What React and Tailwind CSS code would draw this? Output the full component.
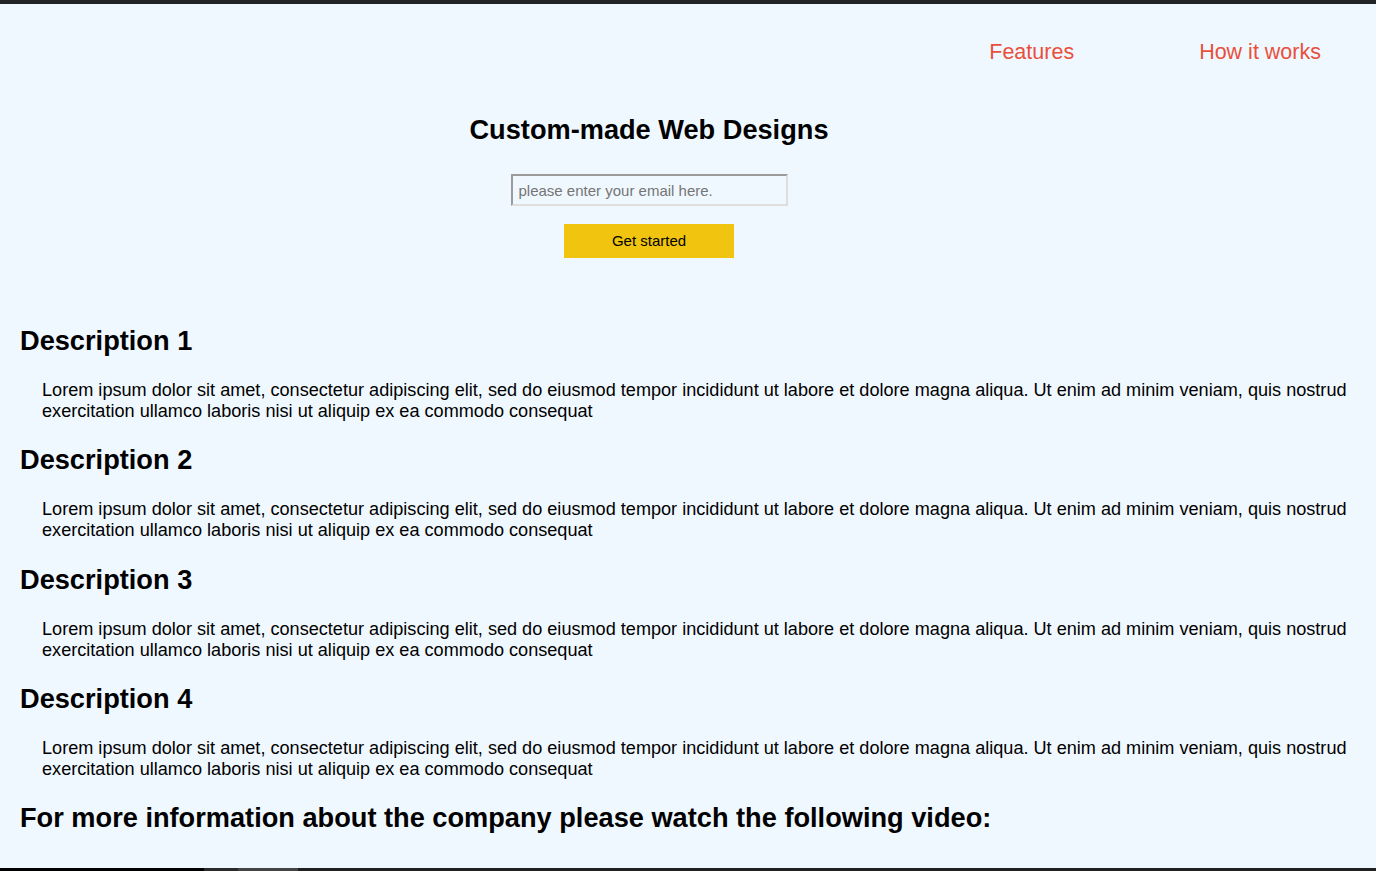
const lorem =
  'Lorem ipsum dolor sit amet, consectetur adipiscing elit, sed do eiusmod tempor incididunt ut labore et dolore magna aliqua. Ut enim ad minim veniam, quis nostrud exercitation ullamco laboris nisi ut aliquip ex ea commodo consequat'

const descriptions = [1, 2, 3, 4]

export default function App() {
  return (
    <div
      className="h-[871px] w-[1376px] overflow-hidden flex flex-col bg-[#f0f8ff] text-black"
      style={{ fontFamily: '"Liberation Sans", Arial, sans-serif' }}
    >
      <div className="h-[4px] bg-[#222528] shrink-0" />

      <div className="flex-1 overflow-hidden">
        {/* Nav */}
        <nav className="flex justify-end gap-[125px] pr-[55px] pt-[35px] h-[110px]">
          <a className="text-[21.5px] leading-[26px] text-[#e8503c]">Features</a>
          <a className="text-[21.5px] leading-[26px] text-[#e8503c]">How it works</a>
        </nav>

        {/* Hero */}
        <section className="flex flex-col items-center pr-[78px]">
          <h1 className="text-[27.2px] leading-[32px] font-bold">Custom-made Web Designs</h1>
          <input
            type="email"
            placeholder="please enter your email here."
            className="mt-[28px] w-[277px] h-[32px] px-[6px] pt-[1px] text-[15px] bg-[#f0f8ff] border-2 border-[#9b9b9b] border-b-[#dedede] border-r-[#dedede] placeholder:text-[#757575] outline-none"
          />
          <button className="mt-[18px] w-[170px] h-[34px] pt-[1px] bg-[#f1c40f] text-[15px]">
            Get started
          </button>
        </section>

        {/* Descriptions */}
        <section className="px-[20px] pt-[67px]">
          {descriptions.map((n) => (
            <div key={n} className="h-[119.25px]">
              <h2 className="text-[27.2px] leading-[32px] font-bold">Description {n}</h2>
              <p className="mt-[23px] pl-[22px] pr-[6px] text-[18.13px] leading-[21px]">{lorem}</p>
            </div>
          ))}
          <h2 className="text-[27.2px] leading-[32px] font-bold">
            For more information about the company please watch the following video:
          </h2>
        </section>
      </div>

      <div className="h-[3px] shrink-0 bg-[#202020] flex">
        <div className="w-[204px] bg-black" />
        <div className="w-[34px] bg-[#2a2a2a]" />
        <div className="w-[60px] bg-[#444]" />
      </div>
    </div>
  )
}
